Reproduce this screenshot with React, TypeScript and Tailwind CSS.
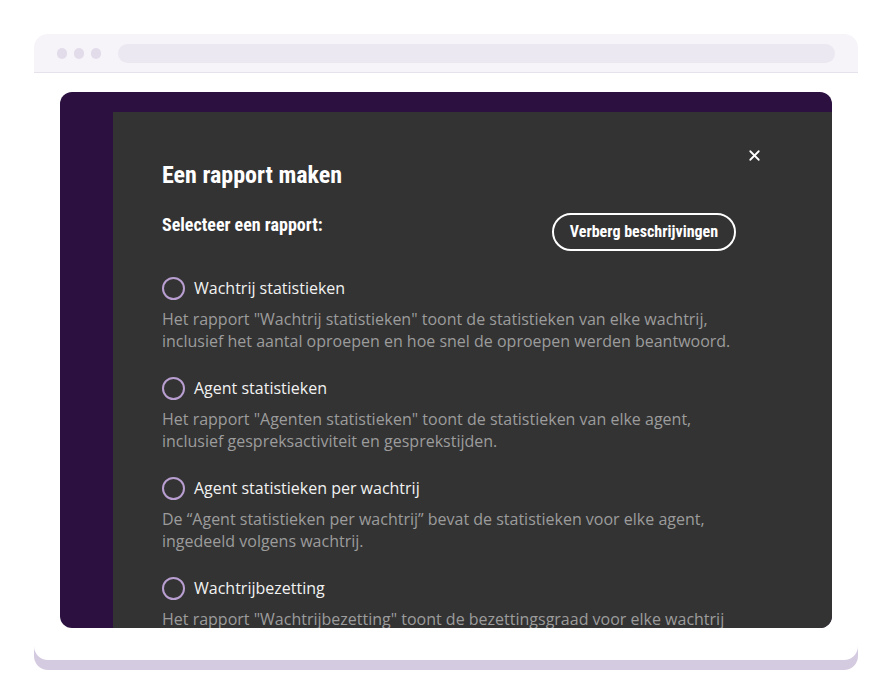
import { X } from "lucide-react";

const reports = [
  {
    label: "Wachtrij statistieken",
    desc: 'Het rapport "Wachtrij statistieken" toont de statistieken van elke wachtrij, inclusief het aantal oproepen en hoe snel de oproepen werden beantwoord.',
  },
  {
    label: "Agent statistieken",
    desc: 'Het rapport "Agenten statistieken" toont de statistieken van elke agent, inclusief gespreksactiviteit en gesprekstijden.',
  },
  {
    label: "Agent statistieken per wachtrij",
    desc: "De \u201cAgent statistieken per wachtrij\u201d bevat de statistieken voor elke agent, ingedeeld volgens wachtrij.",
  },
  {
    label: "Wachtrijbezetting",
    desc: 'Het rapport "Wachtrijbezetting" toont de bezettingsgraad voor elke wachtrij per dag en per uur van de dag.',
  },
];

const condensed = "font-['Liberation_Sans_Narrow','Roboto_Condensed',Roboto,sans-serif]";

export default function App() {
  return (
    <div className="w-[892px] h-[694px] bg-white pt-[34px] pl-[34px]">
      <div className="w-[824px] h-[626px] rounded-[14px] bg-white shadow-[0_10px_0_#d5cbe0] flex flex-col overflow-hidden">
        <div className="h-[39px] shrink-0 bg-[#f6f4f9] border-b border-[#e6e2ec] flex items-center pl-[23px] pr-[23px] gap-[7px]">
          <span className="w-[10px] h-[11px] rounded-full bg-[#e2dcea]" />
          <span className="w-[10px] h-[11px] rounded-full bg-[#e2dcea]" />
          <span className="w-[10px] h-[11px] rounded-full bg-[#e2dcea]" />
          <div className="ml-[10px] flex-1 h-[19px] rounded-full bg-[#ebe8f1]" />
        </div>
        <div className="px-[26px] pt-[19px]">
          <div className="h-[536px] rounded-[12px] bg-[#2b1040] overflow-hidden flex pl-[53px] pt-[20px]">
            <div className="relative flex-1 bg-[#333333] pl-[49px] pt-[49px] font-['Open_Sans',sans-serif]">
              <button className="absolute left-[633px] top-[35px] text-white">
                <X size={17} strokeWidth={2.5} />
              </button>
              <div className="w-[574px] flex flex-col">
                <h1 className={`${condensed} text-[24px] leading-[28px] font-bold text-white`}>
                  Een rapport maken
                </h1>
                <div className="mt-[24px] flex items-start justify-between">
                  <p className={`${condensed} text-[18px] leading-[24px] font-bold text-white`}>
                    Selecteer een rapport:
                  </p>
                  <button
                    className={`${condensed} h-[38px] w-[184px] rounded-full border-2 border-white text-[16px] font-bold text-white`}
                  >
                    Verberg beschrijvingen
                  </button>
                </div>
                <div className="mt-[25px] flex flex-col gap-[24px]">
                  {reports.map((r) => (
                    <div key={r.label} className="flex flex-col gap-[8px]">
                      <label className="flex items-center gap-[9px] text-[16px] leading-[24px] text-[#f2f2f2]">
                        <span className="w-[23px] h-[23px] rounded-full border-2 border-[#b99fd1] shrink-0" />
                        {r.label}
                      </label>
                      <p className="text-[16px] leading-[22px] text-[#9c9c9c] w-[572px]">{r.desc}</p>
                    </div>
                  ))}
                </div>
              </div>
            </div>
          </div>
        </div>
      </div>
    </div>
  );
}
